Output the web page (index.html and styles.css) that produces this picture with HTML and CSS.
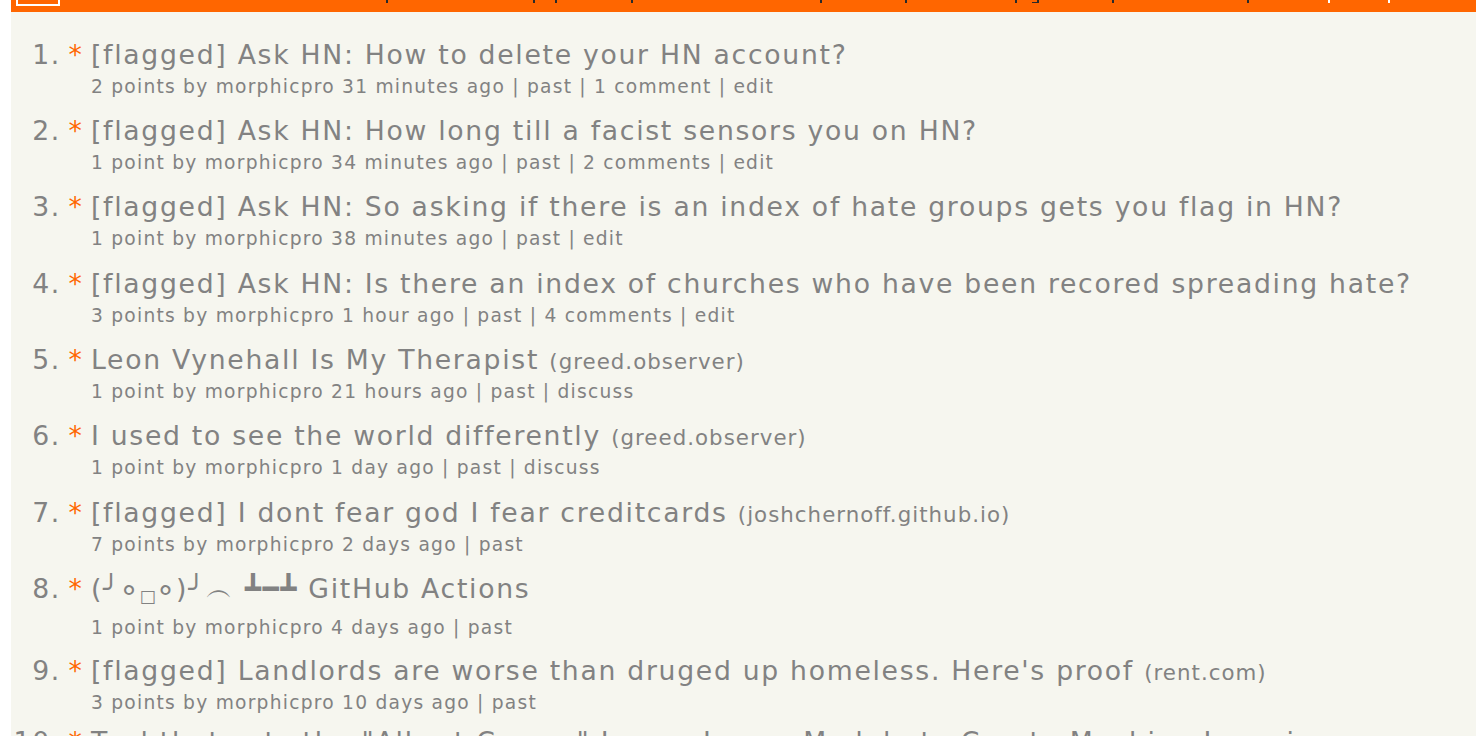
FILE: index.html
```html
<!DOCTYPE html>
<html lang="en">
<head>
<meta charset="utf-8">
<title>morphicpro's submissions | Hacker News</title>
<link rel="stylesheet" href="styles.css">
</head>
<body>
<div class="hnmain">
  <header class="topbar">
    <div class="logo"></div>
    <div class="nav-bits"></div>
  </header>
  <div class="itemlist">
    <div class="item">
      <span class="rank">1.</span>
      <span class="mark">*</span>
      <div class="body">
        <div class="title">[flagged] <a href="#">Ask HN: How to delete your HN account?</a></div>
        <div class="subtext">2 points by <a href="#">morphicpro</a> <a href="#">31 minutes ago</a> | <a href="#">past</a> | <a href="#">1 comment</a> | <a href="#">edit</a></div>
      </div>
    </div>
    <div class="item">
      <span class="rank">2.</span>
      <span class="mark">*</span>
      <div class="body">
        <div class="title">[flagged] <a href="#">Ask HN: How long till a facist sensors you on HN?</a></div>
        <div class="subtext">1 point by <a href="#">morphicpro</a> <a href="#">34 minutes ago</a> | <a href="#">past</a> | <a href="#">2 comments</a> | <a href="#">edit</a></div>
      </div>
    </div>
    <div class="item">
      <span class="rank">3.</span>
      <span class="mark">*</span>
      <div class="body">
        <div class="title">[flagged] <a href="#">Ask HN: So asking if there is an index of hate groups gets you flag in HN?</a></div>
        <div class="subtext">1 point by <a href="#">morphicpro</a> <a href="#">38 minutes ago</a> | <a href="#">past</a> | <a href="#">edit</a></div>
      </div>
    </div>
    <div class="item">
      <span class="rank">4.</span>
      <span class="mark">*</span>
      <div class="body">
        <div class="title">[flagged] <a href="#">Ask HN: Is there an index of churches who have been recored spreading hate?</a></div>
        <div class="subtext">3 points by <a href="#">morphicpro</a> <a href="#">1 hour ago</a> | <a href="#">past</a> | <a href="#">4 comments</a> | <a href="#">edit</a></div>
      </div>
    </div>
    <div class="item">
      <span class="rank">5.</span>
      <span class="mark">*</span>
      <div class="body">
        <div class="title"><a href="#">Leon Vynehall Is My Therapist</a> <span class="sitebit">(<a href="#">greed.observer</a>)</span></div>
        <div class="subtext">1 point by <a href="#">morphicpro</a> <a href="#">21 hours ago</a> | <a href="#">past</a> | <a href="#">discuss</a></div>
      </div>
    </div>
    <div class="item">
      <span class="rank">6.</span>
      <span class="mark">*</span>
      <div class="body">
        <div class="title"><a href="#">I used to see the world differently</a> <span class="sitebit">(<a href="#">greed.observer</a>)</span></div>
        <div class="subtext">1 point by <a href="#">morphicpro</a> <a href="#">1 day ago</a> | <a href="#">past</a> | <a href="#">discuss</a></div>
      </div>
    </div>
    <div class="item">
      <span class="rank">7.</span>
      <span class="mark">*</span>
      <div class="body">
        <div class="title">[flagged] <a href="#">I dont fear god I fear creditcards</a> <span class="sitebit">(<a href="#">joshchernoff.github.io</a>)</span></div>
        <div class="subtext">7 points by <a href="#">morphicpro</a> <a href="#">2 days ago</a> | <a href="#">past</a></div>
      </div>
    </div>
    <div class="item item-tall">
      <span class="rank">8.</span>
      <span class="mark">*</span>
      <div class="body">
        <div class="title"><a href="#">(╯<span class="kao-deg">°</span><span class="kao-box">□</span><span class="kao-deg">°</span>)╯︵ ┻━┻ GitHub Actions</a></div>
        <div class="subtext">1 point by <a href="#">morphicpro</a> <a href="#">4 days ago</a> | <a href="#">past</a></div>
      </div>
    </div>
    <div class="item item-tight">
      <span class="rank">9.</span>
      <span class="mark">*</span>
      <div class="body">
        <div class="title">[flagged] <a href="#">Landlords are worse than druged up homeless. Here's proof</a> <span class="sitebit">(<a href="#">rent.com</a>)</span></div>
        <div class="subtext">3 points by <a href="#">morphicpro</a> <a href="#">10 days ago</a> | <a href="#">past</a></div>
      </div>
    </div>
    <div class="item">
      <span class="rank">10.</span>
      <span class="mark">*</span>
      <div class="body">
        <div class="title"><a href="#">Tool that sets the "Albert Camus" Lorem Ipsum Module to Create Machine Learning</a></div>
        <div class="subtext">1 point by <a href="#">morphicpro</a> <a href="#">12 days ago</a> | <a href="#">past</a></div>
      </div>
    </div>
  </div>
</div>
</body>
</html>
```
FILE: styles.css
```css
html, body {
  margin: 0;
  padding: 0;
  overflow: hidden;
  background: #ffffff;
}

body {
  font-family: "DejaVu Sans", Verdana, sans-serif;
  color: #828282;
}

a {
  color: inherit;
  text-decoration: none;
}

.hnmain {
  margin-left: 11px;
  background: #f6f6ef;
  min-height: 800px;
}

.topbar {
  position: relative;
  height: 12px;
  background: #ff6600;
  display: flex;
  align-items: flex-end;
  padding-left: 5px;
  overflow: hidden;
}

.logo {
  flex: none;
  width: 40px;
  height: 40px;
  border: 2px solid #ffffff;
  margin-bottom: 6px;
}

/* descenders of the (scrolled-away) navigation line */
.nav-bits {
  position: absolute;
  left: 0;
  top: 0;
  width: 100%;
  height: 3px;
  background:
    linear-gradient(#2a2a2a, #2a2a2a) 375px 0 / 2px 3px no-repeat,
    linear-gradient(#2a2a2a, #2a2a2a) 522px 0 / 2px 3px no-repeat,
    linear-gradient(#2a2a2a, #2a2a2a) 544px 0 / 2px 3px no-repeat,
    linear-gradient(#2a2a2a, #2a2a2a) 620px 0 / 2px 3px no-repeat,
    linear-gradient(#2a2a2a, #2a2a2a) 809px 0 / 2px 3px no-repeat,
    linear-gradient(#2a2a2a, #2a2a2a) 894px 0 / 2px 3px no-repeat,
    linear-gradient(#2a2a2a, #2a2a2a) 1004px 0 / 2px 3px no-repeat,
    linear-gradient(#2a2a2a, #2a2a2a) 1026px 0 / 2px 2px no-repeat,
    linear-gradient(#2a2a2a, #2a2a2a) 1021px 2px / 7px 1px no-repeat,
    linear-gradient(#2a2a2a, #2a2a2a) 1101px 0 / 2px 3px no-repeat,
    linear-gradient(#2a2a2a, #2a2a2a) 1236px 0 / 2px 3px no-repeat,
    linear-gradient(#ffffff, #ffffff) 1317px 0 / 2px 3px no-repeat,
    linear-gradient(#ffffff, #ffffff) 1377px 0 / 2px 3px no-repeat;
}

.itemlist {
  padding-top: 22.8px;
}

.item {
  display: grid;
  grid-template-columns: 50px 30px 1fr;
  margin-bottom: 12.33px;
}

.rank,
.mark,
.title {
  font-size: 26.67px;
  line-height: 40px;
  letter-spacing: 0.064em;
}

.rank {
  text-align: right;
}

.mark {
  color: #ff6600;
  text-align: center;
}

.title {
  white-space: nowrap;
}

/* the kaomoji title falls back to taller glyphs */
.item-tall {
  margin-bottom: 11px;
}

.item-tall .title {
  padding-bottom: 6.5px;
}

.item-tight {
  margin-bottom: 7.5px;
}

.kao-deg {
  font-size: 1.2em;
  line-height: 0;
  vertical-align: -0.33em;
  letter-spacing: 0.08em;
}

.kao-box {
  font-size: 0.65em;
  line-height: 0;
  vertical-align: -0.25em;
  letter-spacing: 0.1em;
}

.sitebit {
  font-size: 21.33px;
  line-height: 1;
  letter-spacing: 0.048em;
}

.subtext {
  font-size: 18.67px;
  line-height: 24px;
  letter-spacing: 0.066em;
  white-space: nowrap;
}
```
